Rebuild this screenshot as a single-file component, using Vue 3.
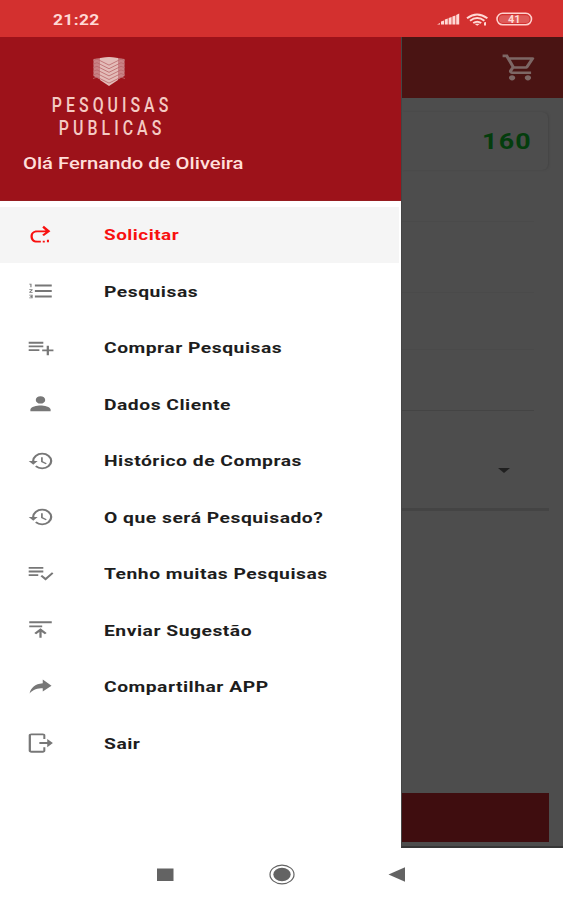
<template>
  <div class="phone">
    <header class="status-bar">
      <span class="clock">21:22</span>
      <svg class="status-icons" viewBox="0 0 100 20">
        <path d="M1 15.500l3-1.500v1.500zM5 15.500v-3l3-1v4zM8.800 15.500v-5l3-1v6zM12.600 15.500v-6.500l3-1v7.500zM16.400 15.500v-8l3-1v9zM20.200 15.500v-9.500l3-1.500v11z" />
        <g class="wifi">
          <path d="M31 9.200q10-7.600 20.400 0" />
          <path d="M34 11.700q7.200-5.300 14.400 0" />
          <path d="M37.200 14q4-2.700 8 0" />
        </g>
        <path d="M38.500 14.800h5.500l-2.800 1.900zM48 13.500l2-.5v3.500h-2z" />
        <rect x="61" y="4.300" width="34.500" height="11.500" rx="5.700" class="battery" />
        <rect x="63" y="6.200" width="30.500" height="7.800" rx="3.800" opacity="0.25" />
        <text x="72" y="13.800" class="battery-text" textLength="12.500" lengthAdjust="spacingAndGlyphs">41</text>
      </svg>
    </header>

    <div class="screen">
      <aside class="drawer">
        <div class="drawer-header">
          <svg class="logo" viewBox="0 0 120 88">
            <path class="shield-side" d="M44.500 7l15.500-2 15.500 2v17l-7.500 4-8 5-8-5-7.500-4z" />
            <path class="shield" d="M51 6l9-1 9 1v22l-9 6-9-6z" />
            <g class="emblem">
              <path v-for="n in 6" :key="n" :d="emblemRow(n)" />
            </g>
            <text x="3.500" y="60.500" textLength="142" transform="scale(.82 1)">PESQUISAS</text>
            <text x="12" y="83.500" textLength="125" transform="scale(.82 1)">PUBLICAS</text>
          </svg>
          <p class="greeting"><span>Olá Fernando de Oliveira</span></p>
        </div>

        <nav class="menu">
          <button
            v-for="item in items"
            :key="item.id"
            class="menu-item"
            :class="{ active: current === item.id }"
            @click="current = item.id"
          >
            <svg class="menu-icon" viewBox="0 0 24 24" preserveAspectRatio="none">
              <path :d="icons[item.icon]" />
            </svg>
            <span class="menu-label">{{ item.label }}</span>
          </button>
        </nav>
      </aside>

      <!-- página escurecida atrás do menu -->
      <main class="page">
        <div class="toolbar">
          <svg class="cart" viewBox="0 0 24 24" preserveAspectRatio="none">
            <path d="M15.550 13c.75 0 1.410-.41 1.750-1.030l3.580-6.490A.996.996 0 0 0 20.010 4H5.210l-.94-2H1v2h2l3.600 7.590-1.350 2.440C4.520 15.370 5.480 17 7 17h12v-2H7l1.100-2h7.450zM6.160 6h12.150l-2.760 5H8.530L6.160 6zM7 18c-1.100 0-1.990.9-1.990 2S5.900 22 7 22s2-.9 2-2-.9-2-2-2zm10 0c-1.100 0-1.990.9-1.990 2s.89 2 1.990 2 2-.9 2-2-.9-2-2-2z" />
          </svg>
        </div>
        <div class="credit-card"><span>160</span></div>
        <div class="field first"></div>
        <div class="field second"></div>
        <div class="field third"></div>
        <div class="field fourth"></div>
        <div class="select"><i class="caret"></i></div>
        <div class="submit"></div>
      </main>
    </div>

    <footer class="nav-bar">
      <svg viewBox="0 0 563 52">
        <rect x="157" y="20.500" width="16.500" height="12.500" />
        <ellipse cx="282" cy="26.500" rx="12" ry="9.400" class="home-ring" />
        <ellipse cx="282" cy="26.500" rx="8.700" ry="6.700" />
        <path d="M388.500 26.500l16.500-7.200v14.400z" />
      </svg>
    </footer>
  </div>
</template>

<script setup>
import { ref } from 'vue'

const current = ref('solicitar')

const items = [
  { id: 'solicitar', label: 'Solicitar', icon: 'request' },
  { id: 'pesquisas', label: 'Pesquisas', icon: 'list' },
  { id: 'comprar', label: 'Comprar Pesquisas', icon: 'add' },
  { id: 'dados', label: 'Dados Cliente', icon: 'person' },
  { id: 'historico', label: 'Histórico de Compras', icon: 'history' },
  { id: 'oque', label: 'O que será Pesquisado?', icon: 'history' },
  { id: 'muitas', label: 'Tenho muitas Pesquisas', icon: 'check' },
  { id: 'sugestao', label: 'Enviar Sugestão', icon: 'send' },
  { id: 'compartilhar', label: 'Compartilhar APP', icon: 'share' },
  { id: 'sair', label: 'Sair', icon: 'exit' }
]

const icons = {
  request: 'M15 2L20.800 7.800l-5.800 5.400-1.500-1.500L16.500 9H9C6.300 9 5.100 10.700 5.100 13.300S6.300 18.300 9 18.300h3.300v2H9C5.300 20.300 3.100 17.600 3.100 13.600S5.300 7 9 7h7.500l-2.900-3.300zM14 18.300h1.800v2H14zM17.700 17.300h1.800v2.500h-1.800z',
  list: 'M2 17h2v.5H3v1h1v.5H2v1h3v-4H2v1zm1-9h1V4H2v1h1v3zm-1 3h1.800L2 13.100v.9h3v-1H3.200L5 10.900V10H2v1zm5-6v2h15V5H7zm0 14h15v-2H7v2zm0-6h15v-2H7v2z',
  add: 'M14.500 9.300h-13v2h13v-2zm0-4h-13v2h13v-2zm5 4.200h-2v4h-4v2h4v4.500h2v-4.500h4v-2h-4v-4zM1.500 15.300H11v-2H1.500v2z',
  person: 'M12 11.500c2.400 0 4.200-1.800 4.200-4s-1.800-4-4.200-4-4.200 1.800-4.200 4 1.800 4 4.200 4zm0 2c-3 0-9 1.500-9 4.500V20h18v-2c0-3-6-4.500-9-4.500z',
  history: 'M13.500 3a9 9 0 0 0-9 9h-3l3.900 3.900.1.140L9.500 12h-3a7 7 0 1 1 7 7c-1.930 0-3.680-.79-4.940-2.060l-1.420 1.420A8.950 8.950 0 0 0 13.500 21a9 9 0 0 0 0-18zM12.500 8v5l4.280 2.540.72-1.210-3.500-2.080V8h-1.500z',
  check: 'M14.500 8.300h-13v2h13v-2zm0-4h-13v2h13v-2zM1.500 14.300H10v-2H1.500v2zM22.200 10l1.300 1.400L16.500 19l-4.500-4.500 1.400-1.400 3.100 3.100z',
  send: 'M2 2.500h20v2H2zM2 7h11.500v2H2zM12 10.200l5.500 5-1.600 1.300-2.900-2.400v6.400h-2v-6.400l-2.900 2.400-1.600-1.300z',
  share: 'M14 8V3.800L21.800 10.500 14 17v-3.700C9.500 13.300 5.500 14.500 2.300 19 3.500 13 7 8.800 14 8z',
  exit: 'M4 1.500h10c1.400 0 2.300.8 2.300 2V7.500h-1.800V3.500h-11v17h11V16.500h1.800V20.500c0 1.200-.9 2-2.300 2H4c-1.500 0-2.500-.8-2.500-2v-17c0-1.200 1-2 2.500-2zM18 7.500l5 4.500-5 4.500V13h-7v-2h7z'
}

// faixas em V que cortam o brasão
const emblemRow = (n) => {
  const y = 4 + n * 3.600
  return `M44 ${y + 1}l4-1.500 4 2 8 4 8-4 4-2 4 1.500`
}
</script>

<style>
body {
  background: #fff;
}
</style>

<style scoped>
.phone {
  width: 563px;
  height: 900px;
  display: flex;
  flex-direction: column;
  overflow: hidden;
  background: #fff;
  font-family: Roboto, "Liberation Sans", sans-serif;
}

.status-bar {
  height: 37px;
  flex: none;
  box-sizing: border-box;
  padding: 0 27px 0 53px;
  display: flex;
  align-items: center;
  justify-content: space-between;
  background: #d3302f;
  color: #ffd9d5;
}

.clock {
  font-size: 15px;
  font-weight: 700;
  line-height: 35px;
  padding-top: 4px;
  letter-spacing: 0.3px;
  transform: scaleX(1.16);
  transform-origin: left;
}

.status-icons {
  width: 100px;
  height: 20px;
  fill: #ffd9d5;
}

.wifi {
  fill: none;
  stroke: #ffd9d5;
  stroke-width: 2;
}

.battery {
  fill: none;
  stroke: #ffd0cc;
  stroke-width: 1.6;
}

.battery-text {
  font-size: 10.500px;
  font-weight: 700;
}

.screen {
  height: 811px;
  flex: none;
  display: flex;
}

.drawer {
  width: 401px;
  flex: none;
  background: #fff;
}

.drawer-header {
  height: 164px;
  box-sizing: border-box;
  padding: 15px 23px 0;
  background: #9d121a;
  border-bottom: 1px solid #961c20;
}

.logo {
  display: block;
  width: 120px;
  height: 88px;
  margin-left: 26px;
}

.logo text {
  font-size: 19.400px;
  font-weight: 500;
  fill: #f4cac3;
}

.shield {
  fill: #e3bcb8;
}

.shield-side {
  fill: #c98285;
}

.emblem path {
  fill: none;
  stroke: #b9666a;
  stroke-width: 0.8;
}

.greeting {
  margin: 13px 0 0;
  font-size: 16px;
  line-height: 22px;
  font-weight: 500;
  color: #ffdfda;
  white-space: nowrap;
}

.greeting span {
  display: inline-block;
  transform: scaleX(1.265);
  transform-origin: left;
}

.menu {
  display: flex;
  flex-direction: column;
  padding-top: 5.500px;
}

.menu-item {
  height: 56.500px;
  flex: none;
  width: 399px;
  border: none;
  margin: 0;
  padding: 0 0 0 27px;
  display: flex;
  align-items: center;
  gap: 50px;
  background: none;
  color: #1d1d1d;
  font-family: inherit;
  cursor: pointer;
}

.menu-item.active {
  background: #f5f5f5;
  color: #f8100f;
}

.menu-icon {
  width: 27px;
  height: 22px;
  fill: #777;
}

.active .menu-icon {
  fill: #f8100f;
}

.menu-label {
  padding-top: 1px;
  font-size: 15px;
  line-height: 20px;
  font-weight: 700;
  letter-spacing: 0.4px;
  white-space: nowrap;
  transform: scaleX(1.285);
  transform-origin: left;
}

.active .menu-label {
  transform: scaleX(1.26);
}

.page {
  flex: 1;
  display: flex;
  flex-direction: column;
  box-sizing: border-box;
  background: #4d4d4d;
  border-left: 1px solid #454545;
  border-bottom: 2px solid #363636;
}

.toolbar {
  height: 61px;
  flex: none;
  display: flex;
  align-items: center;
  justify-content: flex-end;
  padding-right: 24px;
  background: #4a1413;
}

.cart {
  width: 38px;
  height: 31px;
  fill: #7d6765;
}

.credit-card {
  height: 58px;
  flex: none;
  box-sizing: border-box;
  margin: 14px 15px 0 0;
  padding-right: 16px;
  display: flex;
  align-items: center;
  justify-content: flex-end;
  border-radius: 0 6px 6px 0;
  box-shadow: 1px 0 2px #444;
  color: #043d0d;
  font-size: 22px;
  font-weight: 700;
  letter-spacing: 1px;
}

.credit-card span {
  transform: scaleX(1.22);
  transform-origin: right;
}

.field {
  flex: none;
  box-sizing: border-box;
  margin-right: 29px;
  border-bottom: 1px solid #4a4a4a;
}

.first {
  height: 52px;
}

.second {
  height: 71px;
}

.third {
  height: 57px;
}

.fourth {
  height: 61px;
  border-bottom-color: #444;
}

.select {
  height: 100px;
  flex: none;
  box-sizing: border-box;
  margin-right: 14px;
  padding: 57px 39px 0 0;
  display: flex;
  justify-content: flex-end;
  border-bottom: 3px solid #444;
}

.caret {
  width: 0;
  height: 0;
  border: 6.500px solid transparent;
  border-top: 5px solid #202020;
  border-bottom: 0;
}

.submit {
  height: 49px;
  flex: none;
  margin: auto 14px 4px 0;
  background: #3f0d0f;
}

.nav-bar {
  height: 52px;
  flex: none;
  box-sizing: border-box;
  background: #fff;
}

.nav-bar svg {
  display: block;
  width: 563px;
  height: 52px;
  fill: #636363;
}

.nav-bar .home-ring {
  fill: none;
  stroke: #636363;
  stroke-width: 1.2;
}
</style>
